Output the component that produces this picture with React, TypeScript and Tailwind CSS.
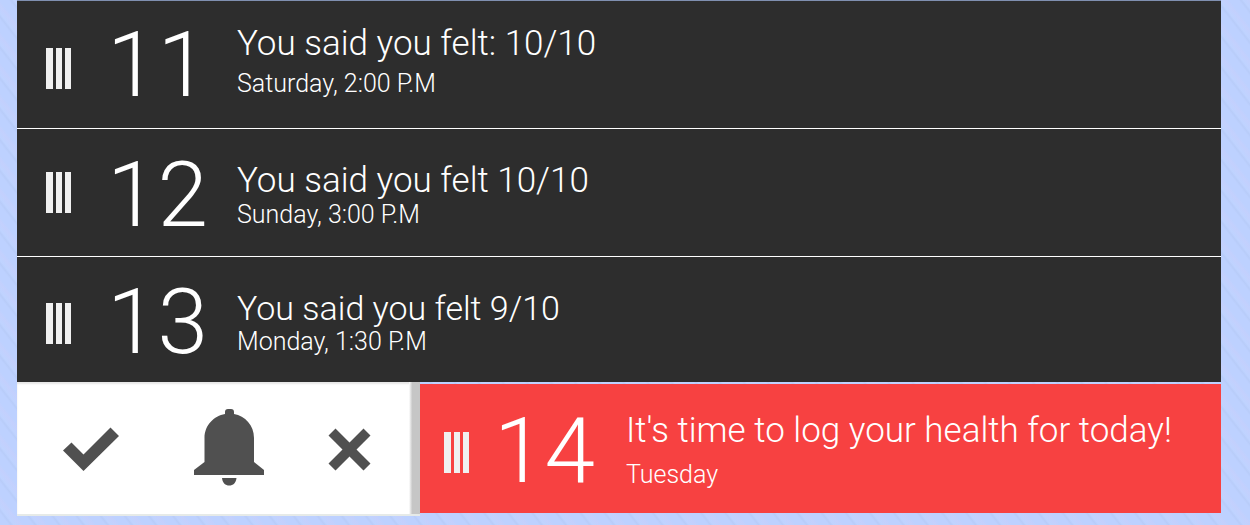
type Entry = {
  day: string;
  title: string;
  time: string;
  row: string;
  columns: string;
  number: string;
  heading: string;
  text: string;
  handle: string;
};

const entries: Entry[] = [
  {
    day: "11",
    title: "You said you felt: 10/10",
    time: "Saturday, 2:00 P.M",
    row: "h-[127px]",
    columns: "grid-cols-[61px_130px_1fr]",
    number: "pt-0",
    heading: "text-[35px]",
    text: "gap-2.5 pb-1",
    handle: "pt-2",
  },
  {
    day: "12",
    title: "You said you felt 10/10",
    time: "Sunday, 3:00 P.M",
    row: "h-[127px]",
    columns: "grid-cols-[61px_130px_1fr]",
    number: "pt-1",
    heading: "text-[35px]",
    text: "gap-1 pt-2",
    handle: "pt-0",
  },
  {
    day: "13",
    title: "You said you felt 9/10",
    time: "Monday, 1:30 P.M",
    row: "h-[125px]",
    columns: "grid-cols-[61px_130px_1fr]",
    number: "pt-1",
    heading: "text-[34px]",
    text: "gap-1 pt-2",
    handle: "pt-2",
  },
];

function Handle() {
  return (
    <span className="flex h-[41px] w-[25px] gap-[3px]" aria-hidden="true">
      <span className="w-[7px] bg-[#f0f0f0]" />
      <span className="w-[6px] bg-[#f0f0f0]" />
      <span className="w-[6px] bg-[#f0f0f0]" />
    </span>
  );
}

function EntryContent({ day, title, time, columns, number, heading, text, handle }: Omit<Entry, "row">) {
  return (
    <div className={`grid grow items-center ${columns}`}>
      <div className={handle}>
        <Handle />
      </div>
      <div className={`text-[91px] leading-[92px] ${number}`}>{day}</div>
      <div className={`flex min-w-0 flex-col ${text}`}>
        <h2 className={`leading-8 whitespace-nowrap ${heading}`}>{title}</h2>
        <p className="text-[25px] leading-7 whitespace-nowrap">{time}</p>
      </div>
    </div>
  );
}

function CheckIcon() {
  return (
    <svg width="56" height="44" viewBox="0 0 56 44" fill="#505050" aria-hidden="true">
      <path d="M0 23.5 8.5 15.5 20.5 27.5 47.5 0.5 56 9 20.5 44Z" />
    </svg>
  );
}

function BellIcon() {
  return (
    <svg width="70" height="77" viewBox="0 0 70 77" fill="#505050" aria-hidden="true">
      <path d="M31 5V3Q31 0 34 0H37Q40 0 40 3V5C51 7 60 16 60 29V53L70 61V66H0V61L10.500 53V29C10.500 16 20 7 31 5Z" />
      <path d="M28 69H42.500C42 74 39 76.500 35.200 76.500S28.500 74 28 69Z" />
    </svg>
  );
}

function CrossIcon() {
  return (
    <svg width="43" height="43" viewBox="0 0 43 43" fill="#505050" aria-hidden="true">
      <path d="M7.500 0.500 21.500 14.500 35.500 0.500 42.500 7.500 28.500 21.500 42.500 35.500 35.500 42.500 21.500 28.500 7.500 42.500 0.500 35.500 14.500 21.500 0.500 7.500Z" />
    </svg>
  );
}

export default function App() {
  return (
    <main className="min-h-screen bg-[#bdd1ff] bg-[repeating-linear-gradient(52deg,#bdd1ff_0px,#bdd1ff_7px,#b8ccf9_9px,#bfd3ff_11px,#c3d0fd_16px,#bdd1ff_19px)] pr-[29px] pl-[17px] font-['Roboto','Liberation_Sans',sans-serif] font-light text-white">
      <ul className="border-t border-[#7f8fb0]">
        {entries.map(({ row, ...entry }, i) => (
          <li
            key={entry.day}
            className={`box-content flex items-center bg-[#2d2d2d] pl-[29px] ${row} ${
              i < 2 ? "border-b border-white" : ""
            }`}
          >
            <EntryContent {...entry} />
          </li>
        ))}
      </ul>
      <section className="flex items-start">
        <div className="flex h-[134px] w-[403px] shrink-0 border-b-2 border-[#e6eae8] bg-white shadow-[inset_0_2px_2px_#0000001a]">
          <div className="flex grow items-center justify-between pr-[38px] pl-[46px]">
            <button type="button" aria-label="Done" className="cursor-pointer pt-0.5">
              <CheckIcon />
            </button>
            <button type="button" aria-label="Remind me" className="cursor-pointer pb-0.5 pl-2.5">
              <BellIcon />
            </button>
            <button type="button" aria-label="Dismiss" className="cursor-pointer pt-0.5">
              <CrossIcon />
            </button>
          </div>
          <div className="w-[11px] bg-linear-to-r from-white via-[#c6c6c6] via-30% to-[#c6c6c6]" />
        </div>
        <div className="mt-[2px] flex h-[129px] min-w-0 grow items-center bg-[#f74141] pl-[24px]">
          <EntryContent
            day="14"
            title="It's time to log your health for today!"
            time="Tuesday"
            columns="grid-cols-[50px_132px_1fr]"
            number="pt-1"
            heading="text-[35px]"
            text="gap-3.5 pt-1.5"
            handle="pt-2"
          />
        </div>
      </section>
    </main>
  );
}
